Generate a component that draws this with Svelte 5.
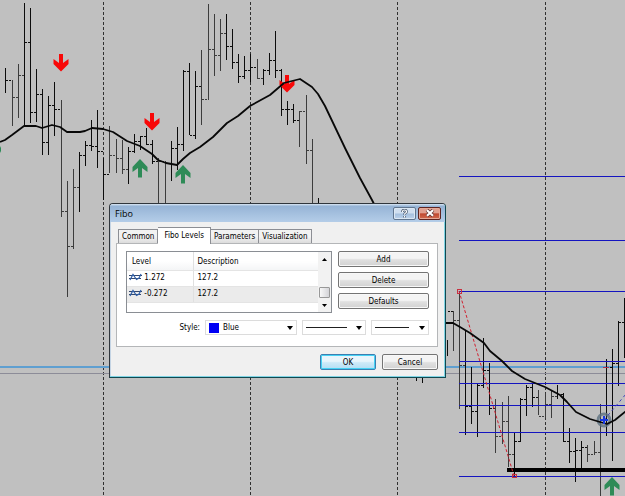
<script>
    // Each bar: x, high, low, close
    const bars = [
        [5, 68, 93, 80], [12, 80, 126, 97], [18, 64, 118, 75], [24, 3, 126, 42],
        [30, 8, 123, 112], [36, 69, 122, 94], [42, 89, 155, 142], [48, 96, 155, 105],
        [54, 82, 136, 109], [61, 100, 217, 211], [67, 181, 297, 246], [73, 169, 249, 187],
        [79, 152, 212, 155], [85, 141, 166, 145], [91, 120, 151, 146], [97, 110, 168, 151],
        [103, 158, 200, 174], [109, 126, 173, 155], [116, 139, 173, 158], [122, 140, 174, 169],
        [128, 147, 184, 151], [134, 134, 153, 141], [140, 136, 150, 136], [146, 128, 145, 144],
        [152, 140, 164, 161], [158, 158, 204, 161], [165, 161, 204, 163], [171, 141, 181, 148],
        [177, 127, 170, 144], [183, 70, 151, 71], [189, 63, 135, 135], [195, 71, 139, 86],
        [201, 50, 125, 99], [208, 4, 100, 49], [214, 14, 76, 55], [220, 19, 71, 33],
        [226, 14, 60, 46], [232, 29, 69, 62], [238, 54, 83, 76], [244, 56, 79, 70],
        [250, 54, 82, 67], [257, 59, 79, 78], [263, 69, 85, 70], [269, 53, 75, 60],
        [275, 31, 78, 70], [281, 69, 116, 109], [287, 101, 125, 109], [293, 104, 123, 120],
        [299, 111, 147, 111], [306, 95, 164, 150], [312, 139, 204, 204], [318, 198, 204, 204],
        [416, 370, 381, 376], [422, 370, 383, 376], [447, 340, 356, 311], [453, 311, 351, 320],
        [459, 291, 409, 365], [465, 330, 435, 406], [471, 367, 424, 411], [477, 383, 437, 385],
        [483, 338, 388, 370], [489, 363, 415, 408], [495, 399, 453, 436], [502, 402, 444, 421],
        [508, 396, 467, 454], [514, 432, 476, 441], [520, 398, 442, 399], [526, 385, 416, 387],
        [532, 383, 407, 397], [538, 390, 415, 416], [545, 393, 418, 404], [551, 390, 418, 396],
        [557, 385, 399, 394], [563, 393, 442, 441], [569, 428, 463, 451], [575, 438, 482, 450],
        [581, 441, 468, 447], [587, 445, 462, 454], [594, 441, 455, 452], [600, 404, 496, 420],
        [606, 359, 436, 367], [612, 349, 461, 363], [618, 321, 386, 322], [624, 298, 358, 330]
    ];

    // These bars come out softer than the rest
    const pale = [12, 18, 61, 67, 73, 109, 116, 122, 158, 165, 201, 208, 214, 220, 257, 299, 306, 312, 453, 459, 495, 502, 508, 538, 545, 551, 587, 594, 600];

    const periods = [103, 250, 397, 545];
    const fiboLines = [176, 240, 291, 361, 383, 405, 432, 476];
    const sells = [[61, 54], [152, 113], [287, 75]];
    const buys = [[140, 159], [183, 165], [612, 477]];

    const average = '0,142 5,140 12,135 24,126 36,126 42,128 52,125 60,127 67,132 80,132 85,131 92,128 103,129 113,132 127,141 140,146 152,154 158,160 166,163 177,165 183,159 190,153 200,147 213,137 227,123 238,116 250,106 270,95 284,83 300,79 312,87 318,94 325,106 335,127 345,148 360,178 372,200 375,206';
    const averageRight = '440,323 453,323 460,327 470,333 484,343 490,351 502,361 512,371 525,379 545,387 560,395 567,402 576,412 590,419 600,422 607,424 615,420 626,411';

    const tabs = ['Common', 'Fibo Levels', 'Parameters', 'Visualization'];
    let activeTab = $state('Fibo Levels');

    const levels = [
        { level: '1.272', description: '127.2' },
        { level: '-0.272', description: '127.2' }
    ];
</script>

<main>
    <svg class="chart" viewBox="0 0 625 496" aria-hidden="true">
        {#each periods as x}
            <line class="period" x1={x + 0.5} x2={x + 0.5} y1="2" y2="496" />
        {/each}

        <rect x="0" y="366" width="625" height="2" fill="#5f9fd0" />
        <rect x="0" y="373" width="625" height="1" fill="#8c8c98" />

        {#each bars as [x, high, low, close]}
            <g fill={pale.includes(x) ? '#3c3c3c' : '#0c0c0c'}>
                <rect {x} y={high} width="1" height={low - high} />
                <rect x={x + 1} y={close} width="2" height="1" />
                <rect x={x + 4} y={close} width="2" height="1" />
            </g>
        {/each}

        {#each fiboLines as y}
            <rect x="459" {y} width="166" height="1" fill="#1414c0" />
        {/each}

        <rect x="507" y="468" width="118" height="4" />
        <line class="trend" x1="459" y1="291" x2="514" y2="476" />
        <rect class="handle" x="457.5" y="289.5" width="4" height="4" />
        <rect class="handle" x="512.5" y="474.5" width="4" height="3" />
        <path d="M603 367.5h6" stroke="#b03048" />

        {#each sells as [x, y]}
            <path transform="translate({x} {y})" fill="#f80808" d="M-2 0H2V9L7.500 5V10L0 17.500L-7.500 10V5L-2 9Z" />
        {/each}
        {#each buys as [x, y]}
            <path transform="translate({x} {y})" fill="#2e8b57" d="M-2 18.500H2V9L7.500 13V8L0 0L-7.500 8V13L-2 9Z" />
        {/each}
        <path d="M0 146l1 2v3l-1 2Z" fill="#2e8b57" />

        <circle cx="604" cy="420" r="6" fill="none" stroke="#5c7080" stroke-width="3" opacity="0.8" />
        <path d="M604 420L626 394" stroke="#4040b8" stroke-dasharray="3 3" />

        <polyline class="average" points={average} />
        <polyline class="average" points={averageRight} />
        <path d="M604 416v8M600 420h8" stroke="#1838e0" stroke-width="2" />
    </svg>

    <div class="dialog" role="dialog" aria-labelledby="title">
        <header>
            <h1 id="title">Fibo</h1>
            <button class="caption" aria-label="Help">
                <svg width="9" height="9" viewBox="0 0 9 9">
                    <path d="M2.500 3V2.500Q2.500 1 4.500 1T6.500 2.700Q6.500 3.600 5.300 4.200Q4.500 4.600 4.500 5.700M4.500 7v1.400" fill="none" stroke="#46566c" stroke-width="2.600" />
                    <path d="M2.500 3V2.500Q2.500 1 4.500 1T6.500 2.700Q6.500 3.600 5.300 4.200Q4.500 4.600 4.500 5.700M4.500 7v1.400" fill="none" stroke="#fff" stroke-width="1.200" />
                </svg>
            </button>
            <button class="caption close" aria-label="Close">
                <svg width="10" height="8" viewBox="0 0 10 8">
                    <path d="M2 1.200L8 6.800M8 1.200L2 6.800" stroke="#5c3434" stroke-width="3.600" />
                    <path d="M2 1.200L8 6.800M8 1.200L2 6.800" stroke="#fff" stroke-width="2.200" />
                </svg>
            </button>
        </header>

        <div class="tabs" role="tablist">
            {#each tabs as tab}
                <button role="tab" class:active={tab === activeTab} aria-selected={tab === activeTab} onclick={() => (activeTab = tab)}>{tab}</button>
            {/each}
        </div>

        <section class="panel">
            <div class="top">
                <div class="list">
                    <table>
                        <thead>
                            <tr><th>Level</th><th>Description</th></tr>
                        </thead>
                        <tbody>
                            {#each levels as row}
                                <tr>
                                    <td>
                                        <svg width="13" height="8" viewBox="0 0 13 8">
                                            <path d="M0 2.500H13M0 5.500H12" stroke="#34486c" />
                                            <path d="M1 7L4 1.500L7.500 6.500L10 5L12 1" fill="none" stroke="#2f5fa8" stroke-width="1.200" />
                                        </svg>
                                        {row.level}
                                    </td>
                                    <td>{row.description}</td>
                                </tr>
                            {/each}
                        </tbody>
                    </table>
                    <div class="scroll">
                        <button aria-label="Scroll up"><svg width="5" height="3" viewBox="0 0 5 3"><path d="M0 3L2.500 0L5 3Z" /></svg></button>
                        <div class="thumb"></div>
                        <button aria-label="Scroll down"><svg width="5" height="3" viewBox="0 0 5 3"><path d="M0 0H5L2.500 3Z" /></svg></button>
                    </div>
                </div>
                <div class="actions">
                    <button class="push">Add</button>
                    <button class="push">Delete</button>
                    <button class="push">Defaults</button>
                </div>
            </div>

            <div class="style-row">
                <label for="color">Style:</label>
                <div class="combo color">
                    <span class="swatch"></span>
                    <select id="color"><option>Blue</option></select>
                    <svg class="arrow" width="6" height="4" viewBox="0 0 6 4"><path d="M0 0H6L3 4Z" /></svg>
                </div>
                <div class="combo line">
                    <span class="stroke"></span>
                    <select aria-label="Line style"><option aria-label="Solid"></option></select>
                    <svg class="arrow" width="6" height="4" viewBox="0 0 6 4"><path d="M0 0H6L3 4Z" /></svg>
                </div>
                <div class="combo width">
                    <span class="stroke"></span>
                    <select aria-label="Line width"><option aria-label="Thin"></option></select>
                    <svg class="arrow" width="6" height="4" viewBox="0 0 6 4"><path d="M0 0H6L3 4Z" /></svg>
                </div>
            </div>
        </section>

        <footer>
            <button class="push ok">OK</button>
            <button class="push">Cancel</button>
        </footer>
    </div>
</main>

<style>
    :global(body) {
        margin: 0;
        background: #c0c0c0;
    }
    main {
        position: relative;
        overflow: hidden;
        font-family: "DejaVu Sans Condensed", Tahoma, sans-serif;
        font-size: 8px;
        color: #000;
    }
    .chart {
        display: block;
        width: 100%;
    }
    .period {
        stroke: #303030;
        stroke-dasharray: 3 2;
    }
    .trend {
        stroke: #d02030;
        stroke-dasharray: 3 2;
    }
    .handle {
        fill: none;
        stroke: #c83040;
    }
    .average {
        fill: none;
        stroke: #080808;
        stroke-width: 1.8;
        stroke-linejoin: round;
    }
    button, select {
        font: inherit;
        color: inherit;
        padding: 0;
        margin: 0;
        border: 0;
        background: none;
    }

    .dialog {
        position: absolute;
        left: 109px;
        top: 203px;
        width: 337px;
        box-sizing: border-box;
        padding: 0 7px 7px 6px;
        background: #f0f0f0;
        border: 1px solid #30363c;
        border-right-color: #104850;
        border-bottom-color: #104850;
        border-radius: 4px 4px 0 0;
        box-shadow: inset -1px -1px #7fd4e4, inset 1px 0 #c4d4e4;
    }
    header {
        display: flex;
        align-items: center;
        gap: 2px;
        height: 18px;
        margin: 0 -7px 5px -6px;
        padding: 0 4px 0 5px;
        background: linear-gradient(#dce8f4, #96b4d6 12%, #b4cde8);
        border-radius: 3px 3px 0 0;
    }
    h1 {
        flex: 1;
        margin: 0;
        font: 9px "Open Sans", "Noto Sans", sans-serif;
    }
    .caption {
        display: flex;
        align-items: center;
        justify-content: center;
        width: 23px;
        height: 13px;
        box-sizing: border-box;
        border: 1px solid #60758e;
        border-radius: 2px;
        background: linear-gradient(#d0dff0 48%, #a4bfdd 52%, #bdd3ec);
        box-shadow: inset 0 0 0 1px #dce8f4;
    }
    .close {
        border-color: #5e2420;
        background: linear-gradient(#e0a090 46%, #c04830 52%, #d06c50);
        box-shadow: inset 0 0 0 1px #e4a898;
    }

    .tabs {
        display: flex;
        align-items: flex-end;
        padding-left: 2px;
    }
    .tabs button {
        height: 14px;
        padding: 0 3px;
        border: 1px solid #8c8e94;
        border-bottom: 0;
        border-left-width: 0;
        background: linear-gradient(#f2f2f2 50%, #dcdcdc);
    }
    .tabs button:first-child {
        border-left-width: 1px;
    }
    .tabs .active {
        position: relative;
        height: 17px;
        padding: 0 6px 2px;
        margin-bottom: -1px;
        background: #fff;
    }
    .panel {
        padding: 7px 8px 11px 9px;
        background: #fff;
        border: 1px solid #b4b6b8;
    }
    .top {
        display: flex;
        gap: 6px;
    }
    .list {
        flex: 1;
        display: flex;
        align-items: flex-start;
        height: 60px;
        border: 1px solid #8a8e94;
    }
    table {
        flex: 1;
        border-collapse: collapse;
        table-layout: fixed;
    }
    th, td {
        height: 16px;
        padding: 0 4px;
        text-align: left;
        font-weight: normal;
        line-height: 12px;
        white-space: nowrap;
        box-sizing: border-box;
        border-right: 1px solid #e0e0e0;
        border-bottom: 1px solid #e4e4e4;
    }
    th {
        height: 18px;
        padding-top: 2px;
        padding-left: 5px;
        background: linear-gradient(#fff 50%, #f4f5f6);
    }
    td:first-child {
        width: 66px;
        padding-left: 2px;
    }
    th:last-child, td:last-child {
        padding-left: 4px;
        border-right: 0;
    }
    td svg {
        vertical-align: -1px;
    }
    tbody tr:last-child {
        background: #ebebeb;
    }
    .scroll {
        display: flex;
        flex-direction: column;
        align-items: center;
        align-self: stretch;
        width: 13px;
        background: #f2f2f2;
    }
    .scroll button {
        display: flex;
        align-items: center;
        justify-content: center;
        width: 13px;
        height: 14px;
    }
    .thumb {
        width: 9px;
        height: 9px;
        margin-top: auto;
        border: 1px solid #989898;
        border-radius: 1px;
        background: linear-gradient(90deg, #f8f8f8, #d4d4d8);
    }
    .actions {
        display: flex;
        flex-direction: column;
        gap: 5px;
        width: 91px;
    }
    .push {
        height: 16px;
        box-sizing: border-box;
        border: 1px solid #747474;
        border-radius: 2px;
        background: linear-gradient(#f4f4f4 45%, #e0e0e0 55%, #d2d2d2);
        box-shadow: inset 0 0 0 1px #f8f8f8;
    }

    .style-row {
        display: flex;
        align-items: center;
        gap: 5px;
        margin-top: 7px;
    }
    label {
        flex: 1;
        text-align: right;
    }
    .combo {
        display: flex;
        align-items: center;
        gap: 4px;
        height: 15px;
        box-sizing: border-box;
        padding: 0 3px;
        border: 1px solid #dcdcdc;
    }
    .combo select {
        flex: 1;
        min-width: 0;
        appearance: none;
        outline: 0;
    }
    .arrow {
        pointer-events: none;
    }
    .swatch {
        width: 10px;
        height: 10px;
        background: #0000f4;
    }
    .stroke {
        height: 1px;
        background: #202020;
    }
    .color {
        width: 92px;
    }
    .line {
        width: 64px;
    }
    .line .stroke {
        width: 41px;
    }
    .width {
        width: 58px;
    }
    .width .stroke {
        width: 34px;
    }

    footer {
        display: flex;
        justify-content: flex-end;
        gap: 6px;
        margin-top: 7px;
    }
    footer .push {
        width: 56px;
    }
    .ok {
        border-color: #3c7fb1;
        background: linear-gradient(#e8f5fc 45%, #cdeaf8 55%, #b4def4);
        box-shadow: inset 0 0 0 1px #46d2f4;
    }
</style>
